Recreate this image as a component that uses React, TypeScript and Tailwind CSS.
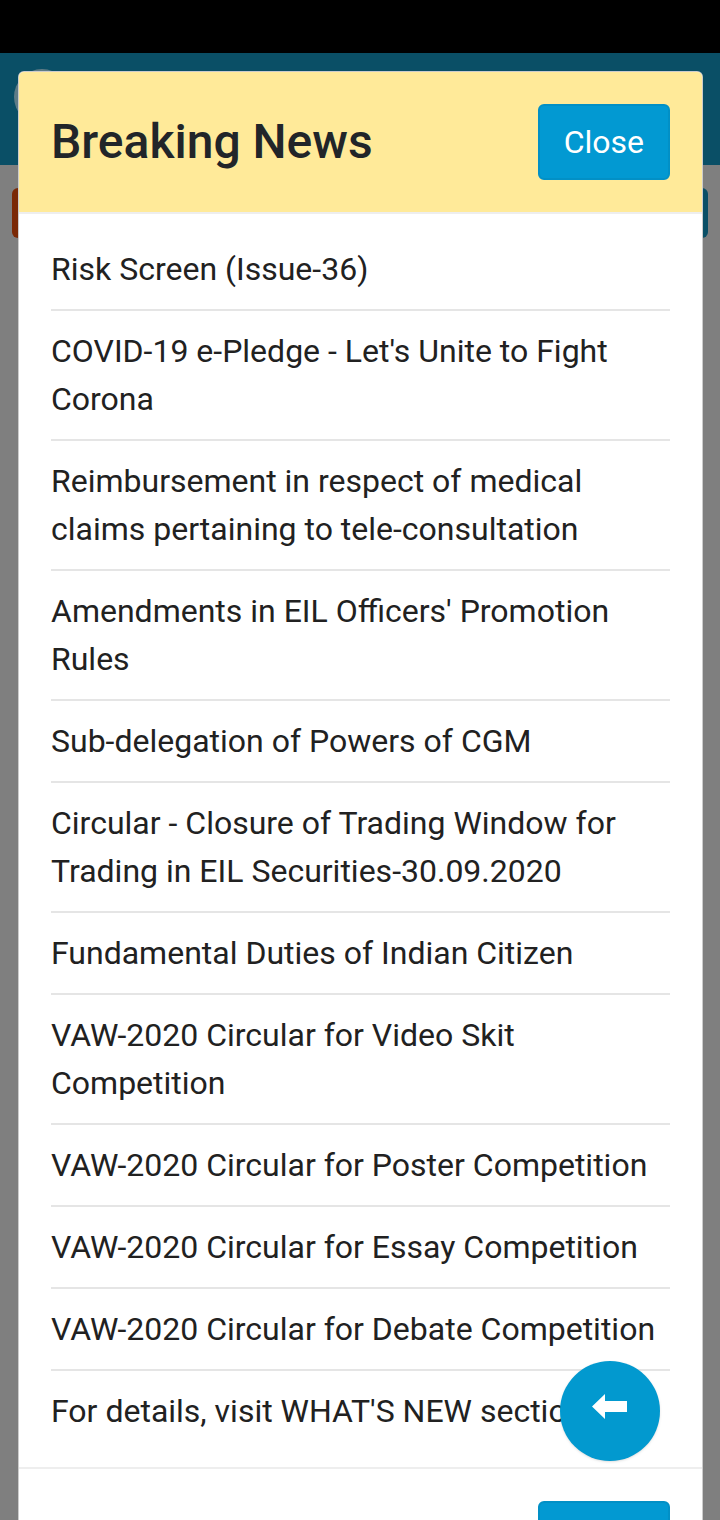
import { useState } from "react";

const NEWS = [
  "Risk Screen (Issue-36)",
  "COVID-19 e-Pledge - Let's Unite to Fight Corona",
  "Reimbursement in respect of medical claims pertaining to tele-consultation",
  "Amendments in EIL Officers' Promotion Rules",
  "Sub-delegation of Powers of CGM",
  "Circular - Closure of Trading Window for Trading in EIL Securities-30.09.2020",
  "Fundamental Duties of Indian Citizen",
  "VAW-2020 Circular for Video Skit Competition",
  "VAW-2020 Circular for Poster Competition",
  "VAW-2020 Circular for Essay Competition",
  "VAW-2020 Circular for Debate Competition",
  "For details, visit WHAT'S NEW section",
];

function BackArrow() {
  return (
    <svg width="36" height="26" viewBox="0 0 36 26" aria-hidden>
      <path d="M0 12.5 L13 0 L13 7 L35 7 L35 18 L13 18 L13 25 Z" fill="#fff" />
    </svg>
  );
}

export default function App() {
  const [open, setOpen] = useState(true);

  return (
    <div className="relative w-[720px] h-[1520px] overflow-hidden bg-[#7f7f7f] font-['Roboto',sans-serif]">
      {/* page behind the overlay */}
      <div className="h-[53px] bg-black" />
      <div className="relative h-[112px] bg-[#0a4f66]">
        <div className="absolute left-[14px] top-[16px] h-[56px] w-[56px] rounded-full bg-[#5f7c86]" />
      </div>
      <div className="flex gap-4 px-[12px] pt-[23px]">
        <div className="h-[50px] flex-1 rounded-md bg-[#7a2906]" />
        <div className="h-[50px] flex-1 rounded-md bg-[#0a4f66]" />
      </div>

      {open && (
        <div className="absolute left-[18px] top-[71px] w-[685px] rounded-md border border-black/20 bg-white overflow-hidden">
          <div className="flex items-center justify-between border-b-2 border-[#eeeeee] bg-[#ffea99] px-[32px] py-[32px]">
            <h4 className="text-[48px] font-medium leading-[1.2] text-[#212529]">
              Breaking News
            </h4>
            <button
              onClick={() => setOpen(false)}
              className="rounded-md border-2 border-[#0290c6] bg-[#0299d2] px-[24px] py-[12px] text-[32px] leading-[48px] text-white"
            >
              Close
            </button>
          </div>

          <ul className="px-[32px] pt-[15px] pb-[16px]">
            {NEWS.map((n, i) => (
              <li
                key={n}
                className={`py-[16px] text-[32px] leading-[48px] text-[#212121] ${
                  i < NEWS.length - 1 ? "border-b-2 border-[#e5e5e5]" : ""
                }`}
              >
                {n}
              </li>
            ))}
          </ul>

          <div className="flex justify-end border-t-2 border-[#eeeeee] px-[32px] pt-[32px] pb-[32px]">
            <button
              onClick={() => setOpen(false)}
              className="rounded-md border-2 border-[#0290c6] bg-[#0299d2] px-[24px] py-[12px] text-[32px] leading-[48px] text-white"
            >
              Close
            </button>
          </div>
        </div>
      )}

      <button className="absolute left-[560px] top-[1361px] flex h-[100px] w-[100px] items-center justify-center rounded-full bg-[#0299cf] pb-[8px] shadow-sm">
        <BackArrow />
      </button>
    </div>
  );
}
